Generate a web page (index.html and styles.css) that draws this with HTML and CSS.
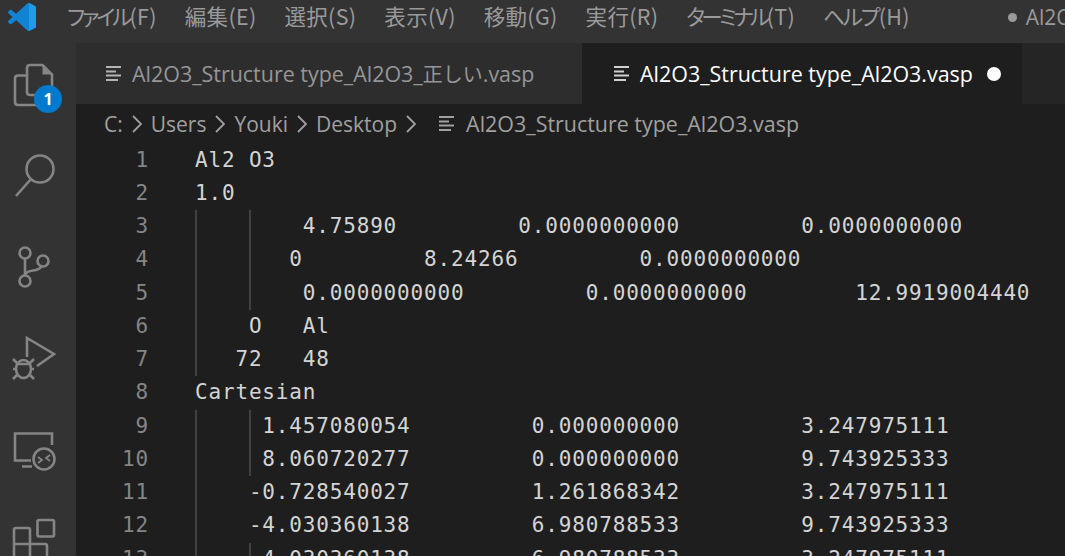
FILE: index.html
```html
<!DOCTYPE html>
<html lang="ja">
<head>
<meta charset="utf-8">
<title>Al2O3_Structure type_Al2O3.vasp</title>
<link rel="stylesheet" href="styles.css">
</head>
<body>
<div class="window">
  <header class="titlebar">
    <svg class="logo" viewBox="0 0 100 100" width="28" height="28"><path class="logo-back" d="M70.9 99.3c1.6.6 3.4.6 5-.2l20.6-9.9c2.1-1 3.5-3.2 3.5-5.6V16.4c0-2.4-1.4-4.6-3.5-5.6L75.9.9c-2.1-1-4.5-.8-6.4.6-.3.2-.5.4-.7.6L29.4 38 12.2 25c-1.6-1.2-3.8-1.1-5.3.2l-5.5 5c-1.8 1.7-1.8 4.5 0 6.2L16.2 50 1.4 63.6c-1.8 1.7-1.8 4.5 0 6.2l5.5 5c1.5 1.4 3.7 1.5 5.3.2L29.4 62l39.4 36c.6.6 1.3 1 2.1 1.3zM75 27.3 45.1 50 75 72.7V27.3z"/><path class="logo-front" d="M75 0.4l21.5 10.4c2.1 1 3.5 3.2 3.5 5.6v67.2c0 2.4-1.4 4.6-3.5 5.6L75 99.6z"/></svg>
    <nav class="menu">
      <span><span class="kana">ファイル</span>(F)</span><span>編集(E)</span><span>選択(S)</span><span>表示(V)</span><span>移動(G)</span><span>実行(R)</span><span><span class="kana kana-tight">ターミナル</span>(T)</span><span><span class="kana kana-loose">ヘルプ</span>(H)</span>
    </nav>
    <div class="wintitle"><i class="bullet"></i>Al2O3_Structure type_Al2O3.vasp</div>
  </header>
  <div class="body">
    <aside class="activity">
      <div class="act">
        <svg viewBox="0 43 76 92" width="76" height="92"><path d="M27 92V68Q27 65 30 65H42.500L52 74.500V92Q52 95 49 95H30Q27 95 27 92ZM27 75.500H18Q15 75.500 15 78.500V102Q15 105 18 105H37Q40 105 40 102V95"/><path class="solid" d="M42.500 65V74.500H52Z"/></svg>
        <span class="badge">1</span>
      </div>
      <div class="act">
        <svg viewBox="0 135 76 92" width="76" height="92"><circle cx="40" cy="169" r="13.500"/><path d="M31 179L16 196"/></svg>
      </div>
      <div class="act">
        <svg viewBox="0 227 76 92" width="76" height="92"><circle cx="25" cy="253" r="5.500"/><circle cx="43" cy="261" r="5.500"/><circle cx="25" cy="281" r="5.500"/><path d="M25 258.500V275.500M25 275C27 270 32 271 36 270C39 269 41 268 42 266"/></svg>
      </div>
      <div class="act">
        <svg viewBox="0 319 76 92" width="76" height="92"><path d="M27 357V338L54 354L37 366"/><ellipse cx="23.500" cy="369" rx="7.500" ry="9"/><path d="M16 364H31M13 359L17 363M34 359L30 363M13 369H16M34 369H31M13 379L17 375M34 379L30 375"/></svg>
      </div>
      <div class="act">
        <svg viewBox="0 411 76 92" width="76" height="92"><path d="M52 445V433.500H15V460.500H31M22 466.500H32"/><circle cx="44" cy="459" r="10.500"/><path class="thin" d="M38 457L42 460L38 463M50 455L46 458L50 461"/></svg>
      </div>
      <div class="act">
        <svg viewBox="0 503 76 92" width="76" height="92"><rect x="37.500" y="520" width="16.500" height="16.500" rx="1.500"/><path d="M14 560V530Q14 528 16 528H28Q30 528 30 530V560M14 544H45Q47 544 47 546V560"/></svg>
      </div>
    </aside>
    <main class="main">
      <div class="tabs">
        <div class="tab">
          <svg class="tabicon" viewBox="0 0 15 15" width="15" height="15"><path d="M0 1H15M0 5.500H10M0 9.500H15M0 14H12"/></svg>
          <span class="fname">Al2O3_Structure type_Al2O3_<span class="cjk">正しい</span>.vasp</span>
        </div>
        <div class="tab active">
          <svg class="tabicon" viewBox="0 0 15 15" width="15" height="15"><path d="M0 1H15M0 5.500H10M0 9.500H15M0 14H12"/></svg>
          <span class="fname">Al2O3_Structure type_Al2O3.vasp</span>
          <i class="dot"></i>
        </div>
      </div>
      <div class="crumbs">
        <span>C:</span>
        <svg class="chev" viewBox="0 0 10 18" width="10" height="18"><path d="M1 1L9 9L1 17"/></svg>
        <span>Users</span>
        <svg class="chev" viewBox="0 0 10 18" width="10" height="18"><path d="M1 1L9 9L1 17"/></svg>
        <span>Youki</span>
        <svg class="chev" viewBox="0 0 10 18" width="10" height="18"><path d="M1 1L9 9L1 17"/></svg>
        <span>Desktop</span>
        <svg class="chev" viewBox="0 0 10 18" width="10" height="18"><path d="M1 1L9 9L1 17"/></svg>
        <svg class="tabicon crumbicon" viewBox="0 0 15 15" width="15" height="15"><path d="M0 1H15M0 5.500H10M0 9.500H15M0 14H12"/></svg>
        <span class="fname">Al2O3_Structure type_Al2O3.vasp</span>
      </div>
      <div class="editor">
        <div class="line"><span class="num">1</span><span class="code">Al2 O3</span></div>
        <div class="line"><span class="num">2</span><span class="code">1.0</span></div>
        <div class="line"><span class="num">3</span><span class="code g1 g2">        4.75890         0.0000000000         0.0000000000</span></div>
        <div class="line"><span class="num">4</span><span class="code g1 g2">       0         8.24266         0.0000000000</span></div>
        <div class="line"><span class="num">5</span><span class="code g1 g2">        0.0000000000         0.0000000000        12.9919004440</span></div>
        <div class="line"><span class="num">6</span><span class="code g1">    O   Al</span></div>
        <div class="line"><span class="num">7</span><span class="code g1">   72   48</span></div>
        <div class="line"><span class="num">8</span><span class="code">Cartesian</span></div>
        <div class="line"><span class="num">9</span><span class="code g1 g2">     1.457080054         0.000000000         3.247975111</span></div>
        <div class="line"><span class="num">10</span><span class="code g1 g2">     8.060720277         0.000000000         9.743925333</span></div>
        <div class="line"><span class="num">11</span><span class="code g1">    -0.728540027         1.261868342         3.247975111</span></div>
        <div class="line"><span class="num">12</span><span class="code g1">    -4.030360138         6.980788533         9.743925333</span></div>
        <div class="line"><span class="num">13</span><span class="code g1 g2">     4.030360138         6.980788533         3.247975111</span></div>
      </div>
    </main>
  </div>
</div>
</body>
</html>
```
FILE: styles.css
```css
* { box-sizing: border-box; }
html, body { margin: 0; padding: 0; }
body { overflow: hidden; background: #1e1e1e; }
.window {
  width: 1065px;
  height: 556px;
  display: flex;
  flex-direction: column;
  overflow: hidden;
  font-family: "Open Sans", "Noto Sans CJK JP", sans-serif;
  font-size: 21px;
}
.titlebar {
  height: 43px;
  flex: none;
  background: #333334;
  display: flex;
  align-items: center;
  padding: 0 0 9px 8px;
  color: #9a9a9a;
  white-space: nowrap;
  overflow: hidden;
}
.logo { flex: none; margin-right: 31px; }
.logo-back { fill: #1283d2; }
.logo-front { fill: #1f9be8; }
.menu {
  display: flex;
  gap: 28px;
  margin-bottom: 3px;
  font-size: 21.5px;
  letter-spacing: 0.3px;
  font-family: "Noto Sans CJK JP", sans-serif;
  flex: none;
}
.kana { font-feature-settings: "palt"; letter-spacing: -3px; }
.kana-tight { letter-spacing: -3.600px; }
.kana-loose { letter-spacing: -2px; }
.wintitle { margin-left: 98px; flex: none; font-size: 21px; display: flex; align-items: center; }
.bullet { width: 9px; height: 9px; border-radius: 50%; background: #9a9a9a; margin-right: 9px; flex: none; }
.body { flex: 1; display: flex; min-height: 0; }
.activity {
  width: 76px;
  flex: none;
  background: #333334;
  overflow: hidden;
}
.act { position: relative; height: 92px; }
.act svg { display: block; fill: none; stroke: #858585; stroke-width: 2.600; }
.act svg .thin { stroke-width: 1.800; }
.act svg .solid { fill: #858585; stroke: none; }
.badge {
  position: absolute;
  left: 34px;
  top: 42px;
  width: 28px;
  height: 28px;
  border-radius: 50%;
  background: #007acc;
  color: #fff;
  font-size: 16px;
  font-weight: 700;
  line-height: 28px;
  text-align: center;
}
.main { flex: 1; min-width: 0; display: flex; flex-direction: column; background: #1e1e1e; }
.tabs { height: 61px; flex: none; display: flex; background: #252526; }
.tab {
  display: flex;
  align-items: center;
  padding-left: 30px;
  width: 506px;
  flex: none;
  background: #2d2d2d;
  color: #969696;
  white-space: nowrap;
}
.tab.active { background: #1e1e1e; color: #fff; width: 440px; padding-left: 32px; }
.fname { font-size: 21.450px; }
.cjk { font-size: 20px; }
.tabicon { flex: none; margin-right: 11px; fill: none; stroke: #b4b4b4; stroke-width: 2; }
.tab.active .tabicon { stroke: #d0d0d0; }
.dot { width: 14px; height: 14px; border-radius: 50%; background: #fff; margin-left: 14px; flex: none; }
.crumbs {
  height: 39.500px;
  flex: none;
  display: flex;
  align-items: center;
  padding-left: 28px;
  gap: 9px;
  color: #a0a0a0;
  white-space: nowrap;
}
.chev { flex: none; fill: none; stroke: #a0a0a0; stroke-width: 1.800; }
.crumbicon { margin-left: 14px; margin-right: 3px; stroke: #a0a0a0; }
.editor {
  flex: 1;
  min-height: 0;
  overflow: hidden;
  font-family: "DejaVu Sans Mono", monospace;
  font-size: 21px;
  letter-spacing: 0.83px;
  color: #d4d4d4;
}
.line { display: flex; height: 33.27px; line-height: 33.27px; white-space: pre; }
.num { width: 73px; flex: none; text-align: right; color: #858585; }
.code { margin-left: 46px; flex: 1; }
.code.g1 { background: linear-gradient(#404040, #404040) 0 0 / 2px 100% no-repeat; }
.code.g2 {
  background:
    linear-gradient(#404040, #404040) 0 0 / 2px 100% no-repeat,
    linear-gradient(#404040, #404040) 54px 0 / 2px 100% no-repeat;
}
```
